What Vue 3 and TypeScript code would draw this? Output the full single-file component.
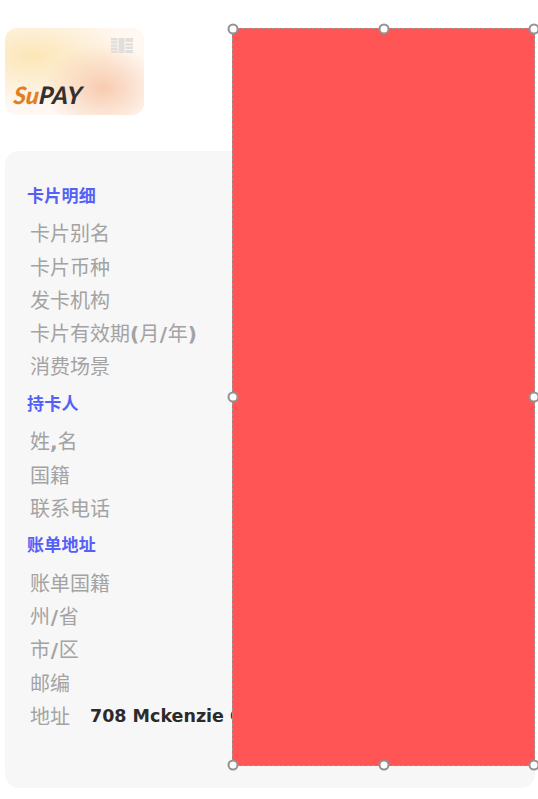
<script setup lang="ts">
interface Part { t: string; b?: boolean }
interface Row { label: Part[]; value?: string }
interface Section { title: string; rows: Row[] }

const plain = (t: string): Part[] => [{ t }]

const sections: Section[] = [
  {
    title: '卡片明细',
    rows: [
      { label: plain('卡片别名') },
      { label: plain('卡片币种') },
      { label: plain('发卡机构') },
      { label: [{ t: '卡片有效期' }, { t: '(', b: true }, { t: '月' }, { t: '/', b: true }, { t: '年' }, { t: ')', b: true }] },
      { label: plain('消费场景') },
    ],
  },
  {
    title: '持卡人',
    rows: [
      { label: [{ t: '姓' }, { t: ',', b: true }, { t: '名' }] },
      { label: plain('国籍') },
      { label: plain('联系电话') },
    ],
  },
  {
    title: '账单地址',
    rows: [
      { label: plain('账单国籍') },
      { label: [{ t: '州' }, { t: '/', b: true }, { t: '省' }] },
      { label: [{ t: '市' }, { t: '/', b: true }, { t: '区' }] },
      { label: plain('邮编') },
      { label: plain('地址'), value: '708 Mckenzie Court' },
    ],
  },
]

const handles = ['tl', 'tc', 'tr', 'ml', 'mr', 'bl', 'bc', 'br']
</script>

<template>
  <div class="page">
    <div class="card">
      <svg class="chip" viewBox="0 0 22 15" width="22" height="15" aria-hidden="true">
        <g fill="#e2dedb">
          <rect x="0" y="0" width="6.5" height="2.4" />
          <rect x="0" y="3.2" width="6.5" height="2.4" />
          <rect x="0" y="6.4" width="6.5" height="2.4" />
          <rect x="0" y="9.6" width="6.5" height="2.4" />
          <rect x="0" y="12.6" width="6.5" height="2.4" />
          <rect x="7.5" y="0" width="6" height="15" />
          <rect x="14.5" y="0" width="7.5" height="4" />
          <rect x="14.5" y="5.2" width="7.5" height="2.4" />
          <rect x="14.5" y="8.6" width="7.5" height="2.4" />
          <rect x="14.5" y="12" width="7.5" height="3" />
        </g>
      </svg>
      <div class="brand"><span class="su">Su</span><span class="pay">PAY</span></div>
    </div>

    <div class="panel">
      <section v-for="s in sections" :key="s.title" class="section">
        <h3 class="title">{{ s.title }}</h3>
        <div v-for="(r, i) in s.rows" :key="i" class="row">
          <span class="label"><template v-for="(p, j) in r.label" :key="j"><b v-if="p.b" :class="{ slash: p.t === '/' }">{{ p.t }}</b><template v-else>{{ p.t }}</template></template></span>
          <span v-if="r.value" class="value">{{ r.value }}</span>
        </div>
      </section>
    </div>

    <div class="overlay">
      <span v-for="h in handles" :key="h" class="handle" :class="h"></span>
    </div>
  </div>
</template>

<style>
html, body { margin: 0; background: #fff; }
</style>

<style scoped>
.page {
  position: relative;
  width: 538px;
  height: 799px;
  overflow: hidden;
  box-sizing: border-box;
  padding: 28px 3px 0 5px;
  background: #fff;
  font-family: "DejaVu Sans", "Noto Sans CJK SC", sans-serif;
}
.card {
  position: relative;
  width: 139px;
  height: 87px;
  border-radius: 12px;
  overflow: hidden;
  margin-bottom: 36px;
  background:
    radial-gradient(ellipse 60px 44px at 98px 60px, rgba(247, 198, 168, 0.9), rgba(247, 198, 168, 0) 100%),
    radial-gradient(ellipse 100px 50px at 28px 28px, rgba(252, 229, 180, 0.95), rgba(252, 229, 180, 0) 100%),
    #fff8f2;
}
.chip {
  position: absolute;
  top: 10px;
  right: 11px;
}
.brand {
  position: absolute;
  left: 9px;
  bottom: 7px;
  font-family: "Lato", sans-serif;
  font-size: 24px;
  line-height: 26px;
  font-weight: 900;
  font-style: italic;
  transform: skewX(-6deg);
}
.su { color: #e27f24; }
.pay { color: #33302e; letter-spacing: 0.4px; }
.panel {
  box-sizing: border-box;
  height: 637px;
  border-radius: 14px;
  background: #f7f7f7;
  padding: 32px 22px 0;
}
.section { margin-bottom: 8.6px; }
.title {
  margin: 0 0 7.4px;
  font-size: 17px;
  line-height: 26px;
  font-weight: 700;
  color: #5460f6;
  letter-spacing: 0.25px;
}
.row {
  display: flex;
  align-items: center;
  gap: 20px;
  height: 33.2px;
  padding-left: 3px;
  white-space: nowrap;
}
.label {
  font-size: 20px;
  color: #a3a3a3;
  font-weight: 400;
}
.label b { font-weight: 700; }
.label b.slash { padding: 0 0.7px; }
.value {
  font-size: 17.5px;
  font-weight: 700;
  color: #2b2b2b;
  padding-top: 1px;
}
.overlay {
  position: absolute;
  left: 232px;
  top: 28px;
  width: 303px;
  height: 738px;
  box-sizing: border-box;
  background: #ff5555;
  border: 1.5px dashed #9c9696;
}
.handle {
  position: absolute;
  width: 11px;
  height: 11px;
  box-sizing: border-box;
  border-radius: 50%;
  background: #fff;
  border: 2px solid #929292;
  transform: translate(-50%, -50%);
}
.tl { left: 0; top: 0; }
.tc { left: 50%; top: 0; }
.tr { left: 100%; top: 0; }
.ml { left: 0; top: 50%; }
.mr { left: 100%; top: 50%; }
.bl { left: 0; top: 100%; }
.bc { left: 50%; top: 100%; }
.br { left: 100%; top: 100%; }
</style>
